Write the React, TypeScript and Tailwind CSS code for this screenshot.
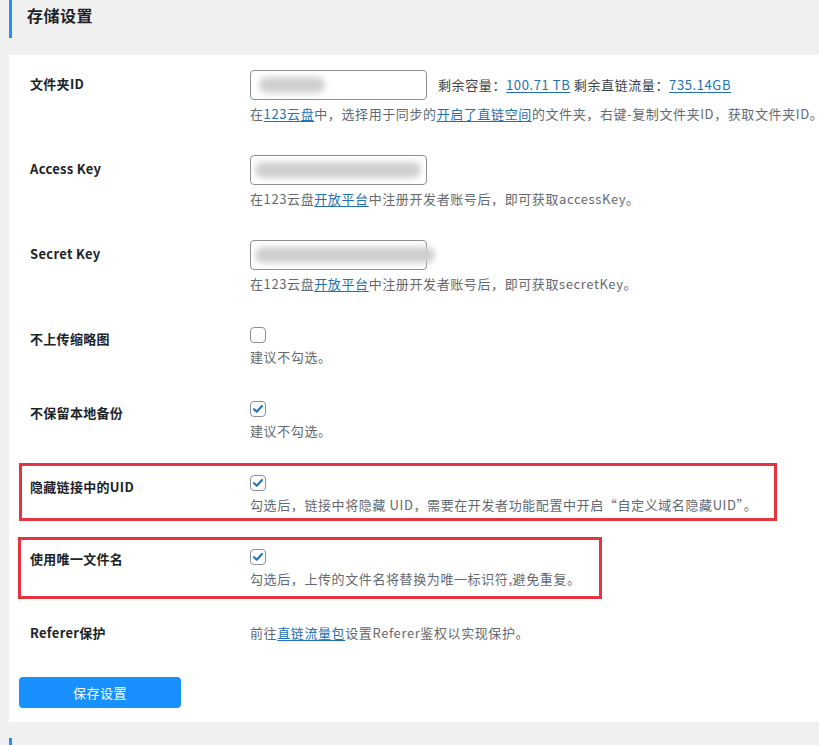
const font = { fontFamily: '"Noto Sans CJK SC", "Noto Sans", sans-serif' }

function Link({ children }: { children: React.ReactNode }) {
  return <a className="text-[#2271b1] underline underline-offset-2">{children}</a>
}

function TextInput({ blur }: { blur: string }) {
  return (
    <div className="relative h-[30px] w-[177px] rounded-[4px] border border-[#8c8f94] bg-white overflow-visible">
      <div className={`absolute top-[6px] h-[16px] rounded-full bg-[#cfcfcf] blur-[3px] ${blur}`} />
    </div>
  )
}

function Checkbox({ checked }: { checked?: boolean }) {
  return (
    <div className="flex h-[16px] w-[16px] items-center justify-center rounded-[4px] border border-[#8c8f94] bg-white">
      {checked && (
        <svg viewBox="0 0 16 16" className="h-[14px] w-[14px]">
          <path d="M3.5 8.2 L6.6 11.2 L12.6 4.6" fill="none" stroke="#2271b1" strokeWidth="2.3" strokeLinecap="round" strokeLinejoin="round" />
        </svg>
      )}
    </div>
  )
}

function Row({
  label,
  children,
  pad,
  labelPad = 'pt-[4px]',
  box,
}: {
  label: string
  children: React.ReactNode
  pad: string
  labelPad?: string
  box?: string
}) {
  return (
    <div className={`relative flex ${pad}`}>
      {box && <div className={`pointer-events-none absolute border-[3px] border-[#e5343f] ${box}`} />}
      <div className={`w-[241px] shrink-0 pl-[21px] text-[13px] font-bold leading-5 tracking-[0.3px] text-[#1d2327] ${labelPad}`}>
        {label}
      </div>
      <div className="min-w-0">{children}</div>
    </div>
  )
}

function Desc({ children }: { children: React.ReactNode }) {
  return <p className="mt-[4px] whitespace-nowrap text-[13px] leading-5 tracking-[0.6px] text-[#646970]">{children}</p>
}

export default function App() {
  return (
    <div className="h-[745px] w-[819px] overflow-hidden bg-[#f0f0f1]" style={font}>
      {/* Heading */}
      <div className="ml-[9px] flex h-[38px] items-start border-l-[3px] border-[#1e90ff] pl-[15px] pt-[4px]">
        <h2 className="text-[16px] font-bold leading-[22px] tracking-[0.5px] text-[#1d2327]">存储设置</h2>
      </div>

      {/* Panel */}
      <div className="ml-[9px] mt-[17px] h-[667px] overflow-hidden bg-white">
        <Row label="文件夹ID" pad="pt-[15px] pb-[15px] h-[85px]">
          <div className="flex items-center gap-[11px]">
            <TextInput blur="left-[8px] w-[66px]" />
            <span className="whitespace-nowrap text-[13px] leading-5 tracking-[0.6px] text-[#3c434a]">
              剩余容量：<Link>100.71 TB</Link> 剩余直链流量：<Link>735.14GB</Link>
            </span>
          </div>
          <Desc>
            在<Link>123云盘</Link>中，选择用于同步的<Link>开启了</Link>
            <Link>直链空间</Link>的文件夹，右键-复制文件夹ID，获取文件夹ID。
          </Desc>
        </Row>

        <Row label="Access Key" pad="pt-[15px] pb-[15px] h-[85px]">
          <TextInput blur="left-[4px] w-[166px]" />
          <Desc>
            在123云盘<Link>开放平台</Link>中注册开发者账号后，即可获取accessKey。
          </Desc>
        </Row>

        <Row label="Secret Key" pad="pt-[15px] pb-[15px] h-[85px]">
          <TextInput blur="left-[4px] w-[180px]" />
          <Desc>
            在123云盘<Link>开放平台</Link>中注册开发者账号后，即可获取secretKey。
          </Desc>
        </Row>

        <Row label="不上传缩略图" pad="pt-[17px] h-[74px]" labelPad="pt-[2px]">
          <Checkbox />
          <Desc>建议不勾选。</Desc>
        </Row>

        <Row label="不保留本地备份" pad="pt-[17px] h-[74px]" labelPad="pt-[2px]">
          <Checkbox checked />
          <Desc>建议不勾选。</Desc>
        </Row>

        <Row label="隐藏链接中的UID" pad="pt-[17px] h-[74px]" labelPad="pt-[2px]" box="left-[10px] top-[5px] h-[58px] w-[758px]">
          <Checkbox checked />
          <Desc>勾选后，链接中将隐藏 UID，需要在开发者功能配置中开启“自定义域名隐藏UID”。</Desc>
        </Row>

        <Row label="使用唯一文件名" pad="pt-[17px] h-[74px]" labelPad="pt-0" box="left-[9px] top-[5px] h-[62px] w-[584px]">
          <Checkbox checked />
          <Desc>勾选后，上传的文件名将替换为唯一标识符,避免重复。</Desc>
        </Row>

        <Row label="Referer保护" pad="pt-[13px] h-[71px]">
          <p className="whitespace-nowrap pt-[4px] text-[13px] leading-5 tracking-[0.6px] text-[#646970]">
            前往<Link>直链流量包</Link>设置Referer鉴权以实现保护。
          </p>
        </Row>

        <div className="pl-[10px]">
          <button className="h-[31px] w-[162px] rounded-[4px] bg-[#1890ff] text-[13px] tracking-[0.5px] text-white">保存设置</button>
        </div>
      </div>

      <div className="ml-[9px] mt-[16px] h-[7px] w-[3px] bg-[#1e90ff]" />
    </div>
  )
}
